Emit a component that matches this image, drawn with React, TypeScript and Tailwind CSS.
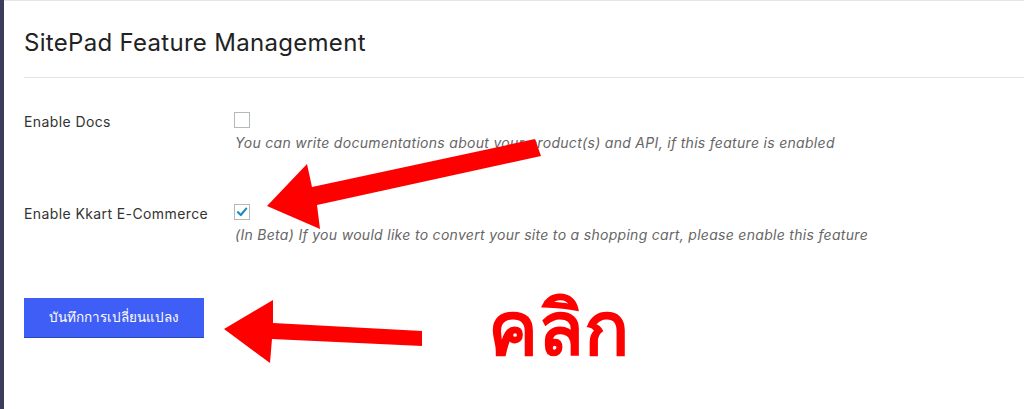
import React from "react";

const font = { fontFamily: "Inter, 'Noto Sans', sans-serif" };

function Row({ label, checked, desc }: { label: string; checked: boolean; desc: string }) {
  return (
    <div className="flex">
      <div className="w-[210px] shrink-0 text-[14px] leading-[20px] tracking-[0.4px] text-[#333]">{label}</div>
      <div className="flex flex-col">
        <div className="w-[16px] h-[16px] border border-[#b4b9be] bg-white flex items-center justify-center">
          {checked && (
            <svg width="12" height="12" viewBox="0 0 12 12">
              <path d="M2 6.2 L4.8 9 L10.2 2.6" fill="none" stroke="#1e8cbe" strokeWidth="2.2" strokeLinecap="round" strokeLinejoin="round" />
            </svg>
          )}
        </div>
        <div className="mt-[5px] pl-[1px] text-[14px] leading-[20px] tracking-[0.3px] italic text-[#666]">{desc}</div>
      </div>
    </div>
  );
}

export default function App() {
  return (
    <div className="relative w-[1024px] h-[409px] flex bg-white overflow-hidden" style={font}>
      <div className="w-[4px] shrink-0 bg-[#3b3e5b]" />
      <div className="flex-1 border-t border-[#e6e6e6] pl-[20px]">
        <h1 className="pt-[26px] pb-[18px] text-[24px] leading-[32px] tracking-[0.3px] font-normal text-[#222] border-b border-[#e3e3e3]">
          SitePad Feature Management
        </h1>
        <div className="pt-[34px] flex flex-col gap-[51px]">
          <Row
            label="Enable Docs"
            checked={false}
            desc="You can write documentations about your product(s) and API, if this feature is enabled"
          />
          <Row
            label="Enable Kkart E-Commerce"
            checked={true}
            desc="(In Beta) If you would like to convert your site to a shopping cart, please enable this feature"
          />
        </div>
        <button
          className="mt-[53px] w-[180px] h-[40px] bg-[#3f5ef5] border-b border-[#2b47b8] text-white text-[13.5px]"
          style={{ fontFamily: "Tahoma, 'Noto Sans', sans-serif" }}
        >
          บันทึกการเปลี่ยนแปลง
        </button>
      </div>

      <svg className="absolute left-0 top-0 pointer-events-none" width="1024" height="409" viewBox="0 0 1024 409">
        <polygon
          points="267,206 307,164 312,187 535,139 541,156 317,205 320,229"
          fill="#ff0000"
        />
        <polygon
          points="224,329 273,300 273,323 422,331 422,346 272,339 270,363"
          fill="#ff0000"
        />
      </svg>
      <div
        className="absolute left-[488px] top-[276px] text-[75px] leading-[100px] font-bold text-[#ff0000]"
        style={{ fontFamily: "Tahoma, 'Noto Sans', sans-serif" }}
      >
        คลิก
      </div>
    </div>
  );
}
